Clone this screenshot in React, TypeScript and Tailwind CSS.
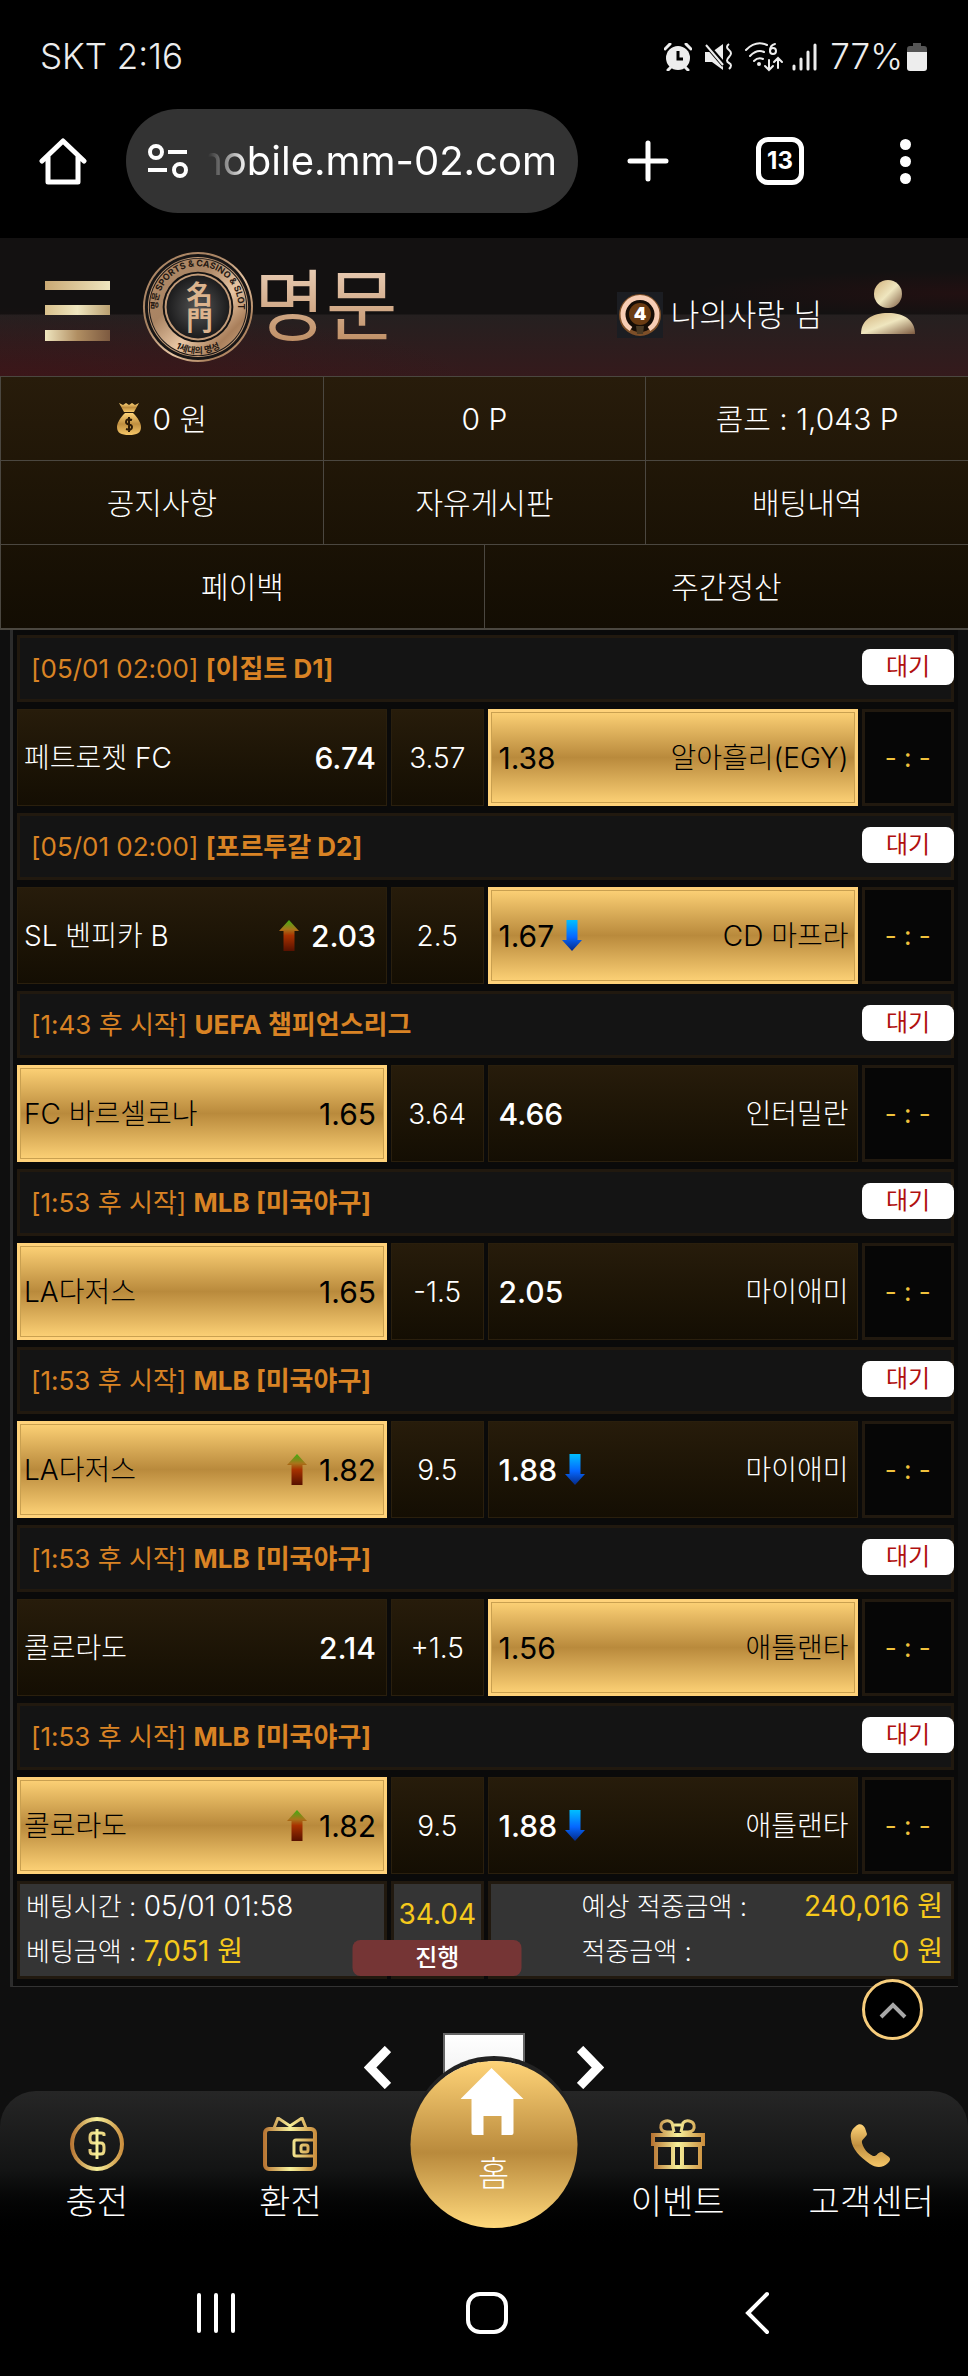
import React from "react";

type Pick = { name?: string; odds: string; move?: "up" | "down" };
type Game = {
  time: string;
  league: string;
  home: Pick;
  draw: string;
  away: Pick;
  picked: "home" | "away";
};

const games: Game[] = [
  { time: "[05/01 02:00]", league: "[이집트 D1]", home: { name: "페트로젯 FC", odds: "6.74" }, draw: "3.57", away: { name: "알아흘리(EGY)", odds: "1.38" }, picked: "away" },
  { time: "[05/01 02:00]", league: "[포르투갈 D2]", home: { name: "SL 벤피카 B", odds: "2.03", move: "up" }, draw: "2.5", away: { name: "CD 마프라", odds: "1.67", move: "down" }, picked: "away" },
  { time: "[1:43 후 시작]", league: "UEFA 챔피언스리그", home: { name: "FC 바르셀로나", odds: "1.65" }, draw: "3.64", away: { name: "인터밀란", odds: "4.66" }, picked: "home" },
  { time: "[1:53 후 시작]", league: "MLB [미국야구]", home: { name: "LA다저스", odds: "1.65" }, draw: "-1.5", away: { name: "마이애미", odds: "2.05" }, picked: "home" },
  { time: "[1:53 후 시작]", league: "MLB [미국야구]", home: { name: "LA다저스", odds: "1.82", move: "up" }, draw: "9.5", away: { name: "마이애미", odds: "1.88", move: "down" }, picked: "home" },
  { time: "[1:53 후 시작]", league: "MLB [미국야구]", home: { name: "콜로라도", odds: "2.14" }, draw: "+1.5", away: { name: "애틀랜타", odds: "1.56" }, picked: "away" },
  { time: "[1:53 후 시작]", league: "MLB [미국야구]", home: { name: "콜로라도", odds: "1.82", move: "up" }, draw: "9.5", away: { name: "애틀랜타", odds: "1.88", move: "down" }, picked: "home" },
];

const darkCell = "bg-linear-to-b from-[#271c0b] to-[#140e03] text-white border border-[#2a1f0d]";
const goldCell =
  "bg-linear-to-b from-[#ffd478] via-[#b98a3c] to-[#ffd478] text-black border border-[#ffd27a] shadow-[inset_0_0_0_2px_#ffd27a,inset_0_0_0_3px_#c9a050]";

function Arrow({ move }: { move: "up" | "down" }) {
  return move === "up" ? (
    <svg width="20" height="31" viewBox="0 0 20 31" aria-label="상승">
      <path d="M10 0 20 11H15.500V31H4.500V11H0Z" fill="url(#moveUp)" />
    </svg>
  ) : (
    <svg width="20" height="31" viewBox="0 0 20 31" aria-label="하락">
      <path d="M10 31 0 20H4.500V0H15.500V20H20Z" fill="url(#moveDown)" />
    </svg>
  );
}

// gradients shared by every icon on the page
function Gradients() {
  return (
    <svg width="0" height="0" className="absolute" aria-hidden="true">
      <defs>
        <linearGradient id="moveUp" x1="0" y1="0" x2="0" y2="1">
          <stop offset="0" stopColor="#3fae12" />
          <stop offset="0.3" stopColor="#a8741a" />
          <stop offset="0.5" stopColor="#a83200" />
          <stop offset="1" stopColor="#571100" />
        </linearGradient>
        <linearGradient id="moveDown" x1="0" y1="0" x2="0" y2="1">
          <stop offset="0" stopColor="#00bfff" />
          <stop offset="0.55" stopColor="#0566ff" />
          <stop offset="1" stopColor="#062a86" />
        </linearGradient>
        <linearGradient id="gold" x1="0" y1="0" x2="1" y2="1">
          <stop offset="0" stopColor="#d2b27c" />
          <stop offset="0.5" stopColor="#efe6bf" />
          <stop offset="1" stopColor="#7d5a40" />
        </linearGradient>
        <linearGradient id="neon" gradientUnits="userSpaceOnUse" x1="0" y1="0" x2="54" y2="0">
          <stop offset="0" stopColor="#b5702f" />
          <stop offset="0.5" stopColor="#f6f09a" />
          <stop offset="1" stopColor="#c98a3a" />
        </linearGradient>
        <linearGradient id="goldDown" x1="0" y1="0" x2="0" y2="1">
          <stop offset="0" stopColor="#ffd478" />
          <stop offset="0.5" stopColor="#c08f40" />
          <stop offset="1" stopColor="#f6c768" />
        </linearGradient>
        <linearGradient id="bronze" x1="0" y1="0" x2="1" y2="1">
          <stop offset="0" stopColor="#b08a68" />
          <stop offset="0.35" stopColor="#a98463" />
          <stop offset="0.6" stopColor="#e8c6a4" />
          <stop offset="0.8" stopColor="#a97f5b" />
          <stop offset="1" stopColor="#d5ac88" />
        </linearGradient>
        <radialGradient id="steel">
          <stop offset="0" stopColor="#555" />
          <stop offset="1" stopColor="#1b1b1c" />
        </radialGradient>
      </defs>
    </svg>
  );
}

function StatusBar() {
  return (
    <div className="flex h-[109px] items-center justify-between pr-[41px] pl-10 pt-1 text-[#ededed]">
      <span className="text-[35px] font-light">SKT 2:16</span>
      <div className="flex items-center">
        <svg width="28" height="28" viewBox="0 0 28 28" fill="#ededed">
          <circle cx="14" cy="15" r="12" />
          <path d="M1 6 6 1M27 6 22 1M4 27l4-4M24 27l-4-4" stroke="#ededed" strokeWidth="3" strokeLinecap="round" />
          <path d="M14 8v8h5" stroke="#000" strokeWidth="3" fill="none" />
        </svg>
        <svg className="ml-3" width="28" height="28" viewBox="0 0 28 28" fill="#ededed">
          <path d="M1 9h7L19 1v26L8 19H1Z" />
          <path d="M1 0 20 22" stroke="#000" strokeWidth="5" />
          <path d="M2 2 19 22" stroke="#ededed" strokeWidth="2" />
          <path d="M25 1q-4 3 0 6t0 7 0 6 0 6" stroke="#ededed" strokeWidth="2" fill="none" />
        </svg>
        <svg className="ml-3" width="40" height="30" viewBox="0 0 40 30" fill="none" stroke="#ededed" strokeWidth="2" strokeLinecap="round">
          <path d="M2 8Q12-2 23 3M6 14q7-7 14-4M10 19q4-4 9-2" />
          <circle cx="15" cy="22" r="1" fill="#ededed" />
          <path d="M31 2q-5 1-5 7" />
          <circle cx="29" cy="9" r="3" />
          <path d="M25 18v10M21 24l4 4 4-4M34 26V16M30 20l4-4 4 4" />
        </svg>
        <svg className="ml-2" width="26" height="28" viewBox="0 0 26 28" stroke="#ededed" strokeWidth="3" strokeLinecap="round">
          <path d="M2 23v3M9 16v10M16 9v17M23 2v24" />
        </svg>
        <span className="ml-3 text-[35px] font-light">77%</span>
        <svg className="ml-1" width="20" height="28" viewBox="0 0 20 28">
          <path d="M6 0h8v3h3q3 0 3 3v4H0V6q0-3 3-3h3Z" fill="#555" />
          <path d="M0 9h20v16q0 3-3 3H3q-3 0-3-3Z" fill="#ededed" />
        </svg>
      </div>
    </div>
  );
}

function BrowserBar() {
  return (
    <div className="flex h-[129px] items-start">
      <button className="flex h-[104px] w-[126px] items-center justify-center" aria-label="홈페이지">
        <svg width="48" height="48" viewBox="0 0 48 48" fill="none" stroke="#fff" strokeWidth="5" strokeLinejoin="round" strokeLinecap="round">
          <path d="M3 24 24 4 45 24M9 19V45H39V19" />
        </svg>
      </button>
      <div className="flex h-[104px] w-[452px] items-center rounded-full bg-[#333] pl-[22px] pr-[21px]">
        <svg className="shrink-0" width="40" height="34" viewBox="0 0 40 34" fill="none" stroke="#fff" strokeWidth="4">
          <circle cx="8" cy="8" r="6" />
          <path d="M20 8h19M0 26h19" />
          <circle cx="32" cy="26" r="6" />
        </svg>
        <div className="ml-5 flex flex-1 justify-end overflow-hidden mask-[linear-gradient(to_right,transparent,#000_40px)]">
          <input aria-label="주소" readOnly value="mobile.mm-02.com" className="w-[400px] shrink-0 bg-transparent text-right text-[40px] text-white outline-none" />
        </div>
      </div>
      <button className="ml-[26px] flex h-[104px] w-[88px] items-center justify-center" aria-label="새 탭">
        <svg width="42" height="42" viewBox="0 0 42 42" stroke="#fff" strokeWidth="5" strokeLinecap="round">
          <path d="M21 3v36M3 21h36" />
        </svg>
      </button>
      <button className="ml-10 flex h-[104px] w-[96px] items-center justify-center">
        <span className="flex size-12 items-center justify-center rounded-xl border-[5px] border-white text-2xl font-bold text-white">13</span>
      </button>
      <button className="ml-auto mr-[31px] flex h-[104px] w-16 flex-col items-center justify-center gap-1.5" aria-label="메뉴">
        <span className="size-[11px] rounded-full bg-white" />
        <span className="size-[11px] rounded-full bg-white" />
        <span className="size-[11px] rounded-full bg-white" />
      </button>
    </div>
  );
}

function Seal() {
  return (
    <svg className="shrink-0" width="112" height="112" viewBox="0 0 114 114" aria-label="명문 로고">
      <defs>
        <path id="sealTop" d="M19 72A41 41 0 1 1 95 72" />
        <path id="sealBottom" d="M24 91A47 47 0 0 0 90 91" />
      </defs>
      <circle cx="57" cy="57" r="56" fill="url(#bronze)" />
      <circle cx="57" cy="57" r="54" fill="#181616" />
      <circle cx="57" cy="57" r="51" fill="#bd9673" />
      <circle cx="57" cy="57" r="50" fill="#181616" />
      <circle cx="57" cy="57" r="49" fill="url(#bronze)" />
      <circle cx="57" cy="57" r="36" fill="#131212" />
      <circle cx="57" cy="57" r="34" fill="#c39c79" />
      <circle cx="57" cy="57" r="32" fill="url(#steel)" />
      <text fontSize="9" fontWeight="700" fill="#241812">
        <textPath href="#sealTop" startOffset="50%" textAnchor="middle">명문 SPORTS &amp; CASINO &amp; SLOT</textPath>
      </text>
      <text fontSize="9" fontWeight="700" fill="#241812">
        <textPath href="#sealBottom" startOffset="50%" textAnchor="middle">1세대의 명성</textPath>
      </text>
      <text x="57" y="57" fontSize="27" fontWeight="700" writingMode="vertical-rl" textAnchor="middle" fill="#dcb48e">名門</text>
    </svg>
  );
}

function SiteHeader() {
  return (
    <header className="flex h-[138px] items-center bg-[radial-gradient(ellipse_at_0%_100%,#4a0d1255,transparent_35%),radial-gradient(ellipse_at_100%_40%,#4a0d1244,transparent_20%),linear-gradient(to_bottom,#131111_0,#131111_76px,#252020_77px,#351a1c_100%)] pl-[45px] pr-[52px]">
      <button className="flex w-[65px] flex-col gap-[15px] pt-2" aria-label="전체 메뉴">
        <span className="h-[9px] bg-linear-to-r from-[#c9a974] to-[#efe6bf]" />
        <span className="h-[10px] bg-linear-to-r from-[#d8c08c] via-[#efe6bf] to-[#b99f70]" />
        <span className="h-[11px] bg-linear-to-r from-[#efe6bf] via-[#b08e62] to-[#7d5a40]" />
      </button>
      <a href="#home" className="ml-8 flex items-center">
        <Seal />
        <span className="bg-linear-to-b from-[#ecd3bd] to-[#b98558] bg-clip-text text-[78px] leading-[96px] font-normal text-transparent">명문</span>
      </a>
      <div className="ml-auto flex items-center gap-2 pt-4">
        <svg width="46" height="46" viewBox="0 0 46 46">
          <rect width="46" height="46" fill="#1b1d22" />
          <circle cx="23" cy="23" r="19" fill="#160d06" stroke="#7d4f28" strokeWidth="4" />
          <path d="M14 37A17 17 0 1 1 32 37" fill="none" stroke="#f7cdb4" strokeWidth="5" />
          <circle cx="23" cy="22" r="11" fill="#6a3b12" />
          <path d="M19 34h8l-1 8h-6Z" fill="#4b3a24" />
          <text x="23" y="28" textAnchor="middle" fontSize="18" fontWeight="900" fill="#fff">4</text>
        </svg>
        <span className="text-[31px] leading-10 font-light text-white">나의사랑 님</span>
      </div>
      <button className="ml-[38px]" aria-label="내 정보">
        <svg width="56" height="56" viewBox="0 0 56 56" fill="url(#gold)">
          <circle cx="28" cy="15" r="14" />
          <path d="M1 55C1 41 12 34 28 34S55 41 55 55Z" />
        </svg>
      </button>
    </header>
  );
}

function MenuLink({ children }: { children: React.ReactNode }) {
  return (
    <a href="#menu" className="flex h-[84px] flex-1 items-center justify-center gap-3 border-t border-l border-[#4b4740]">
      {children}
    </a>
  );
}

function SiteMenu() {
  return (
    <nav className="border-b-2 border-[#4b4740] bg-linear-to-b from-[#281c0b] to-[#130d03] text-3xl font-light text-white">
      <div className="flex">
        <MenuLink>
          <svg width="24" height="32" viewBox="0 0 24 32" fill="url(#goldDown)">
            <path d="M2 0l4 2 3-2 3 2 3-2 3 2 4-2-5 9H7Z" />
            <path d="M8 10h8c5 5 8 10 8 14 0 6-4 8-12 8S0 30 0 24c0-4 3-9 8-14Z" />
            <path d="M15 17q-6-2-6 2 0 2 3 2.500t3 2.500q0 4-6 2M12 14v15" fill="none" stroke="#2b1a06" strokeWidth="2" />
          </svg>
          0 원
        </MenuLink>
        <MenuLink>0 P</MenuLink>
        <MenuLink>콤프 : 1,043 P</MenuLink>
      </div>
      <div className="flex">
        <MenuLink>공지사항</MenuLink>
        <MenuLink>자유게시판</MenuLink>
        <MenuLink>배팅내역</MenuLink>
      </div>
      <div className="flex">
        <MenuLink>페이백</MenuLink>
        <MenuLink>주간정산</MenuLink>
      </div>
    </nav>
  );
}

function GameRow({ game }: { game: Game }) {
  const homeOn = game.picked === "home";
  return (
    <>
      <div className="flex h-[67px] items-center bg-[#141414] pl-3.5 shadow-[inset_0_0_0_3px_#21190f]">
        <h3 className="text-[26px] font-normal text-[#d98324]">
          {game.time} <b className="font-bold">{game.league}</b>
        </h3>
        <span className="mt-3.5 ml-auto flex h-9 w-[92px] items-center justify-center self-start rounded-lg bg-white text-2xl text-[#b01010]">
          대기
        </span>
      </div>
      <div className="grid h-[97px] grid-cols-[4fr_1fr_4fr_1fr] gap-1 text-[28px] font-light">
        <button className={`flex items-center pr-2.5 pl-1.5 ${homeOn ? goldCell : darkCell}`}>
          <span>{game.home.name}</span>
          <span className="ml-auto flex items-center gap-3">
            {game.home.move && <Arrow move={game.home.move} />}
            <span className={homeOn ? "text-3xl font-normal" : "text-3xl font-medium"}>{game.home.odds}</span>
          </span>
        </button>
        <div className={`flex items-center justify-center ${darkCell}`}>{game.draw}</div>
        <button className={`flex items-center pr-2 pl-2.5 ${homeOn ? darkCell : goldCell}`}>
          <span className="flex items-center gap-2">
            <span className={homeOn ? "text-3xl font-medium" : "text-3xl font-normal"}>{game.away.odds}</span>
            {game.away.move && <Arrow move={game.away.move} />}
          </span>
          <span className="ml-auto">{game.away.name}</span>
        </button>
        <div className="flex items-center justify-center border-[3px] border-[#21190f] bg-[#060606] text-[26px] font-normal text-[#f0c23c]">- : -</div>
      </div>
    </>
  );
}

function Summary() {
  return (
    <div className="grid h-[98px] grid-cols-[4fr_1fr_4fr_1fr] gap-1 text-[26px] leading-[45px] font-light text-white">
      <div className="border-[3px] border-[#21190f] bg-[#343434] px-1.5">
        <p>
          베팅시간 : <span className="text-[28px]">05/01 01:58</span>
        </p>
        <p>
          베팅금액 : <span className="text-[28px] font-normal text-[#f6c91c]">7,051 원</span>
        </p>
      </div>
      <div className="relative border-[3px] border-[#21190f] bg-[#343434] pt-2 text-center text-[28px] font-normal text-[#f6c91c]">
        34.04
        <span className="absolute bottom-0 left-1/2 z-10 h-9 w-[169px] -translate-x-1/2 rounded-lg bg-[#753535] text-2xl leading-9 font-medium text-white">진행</span>
      </div>
      <div className="col-span-2 border-[3px] border-[#21190f] bg-[#343434] pr-2 pl-[91px]">
        <p className="flex justify-between">
          예상 적중금액 : <span className="text-[28px] font-normal text-[#f6c91c]">240,016 원</span>
        </p>
        <p className="flex justify-between">
          적중금액 : <span className="text-[28px] font-normal text-[#f6c91c]">0 원</span>
        </p>
      </div>
    </div>
  );
}

function Pager() {
  return (
    <div className="relative flex h-[104px] items-start justify-center gap-[52px]">
      <button className="mt-[59px]" aria-label="이전">
        <svg width="27" height="43" viewBox="0 0 27 43" fill="none" stroke="#fff" strokeWidth="9">
          <path d="M24 3 6 21.500 24 40" />
        </svg>
      </button>
      <button className="mt-[46px] h-[58px] w-[82px] border-2 border-[#666] bg-linear-to-b from-white to-[#eee] pt-4 text-3xl text-black">1</button>
      <button className="mt-[59px]" aria-label="다음">
        <svg width="27" height="43" viewBox="0 0 27 43" fill="none" stroke="#fff" strokeWidth="9">
          <path d="M3 3 21 21.500 3 40" />
        </svg>
      </button>
      <button className="absolute -top-2 right-[45px] flex size-[61px] items-center justify-center rounded-full border-[3px] border-[#f7cd7c] bg-black" aria-label="맨 위로">
        <svg width="28" height="18" viewBox="0 0 28 18" fill="none" stroke="#a8a8a8" strokeWidth="4">
          <path d="M2 16 14 4 26 16" />
        </svg>
      </button>
    </div>
  );
}

function NavItem({ label, children }: { label: string; children: React.ReactNode }) {
  return (
    <a href="#nav" className="flex flex-1 flex-col items-center gap-2 pt-[26px]">
      <svg width="54" height="54" viewBox="0 0 54 54" fill="none" stroke="url(#neon)" strokeWidth="4">
        {children}
      </svg>
      <span className="whitespace-nowrap text-[34px] leading-[46px] font-light">{label}</span>
    </a>
  );
}

function BottomNav() {
  return (
    <nav className="relative flex h-[159px] rounded-t-[36px] bg-linear-to-b from-[#262626] via-[#131414] to-black text-white">
      <NavItem label="충전">
        <circle cx="27" cy="27" r="25" />
        <path d="M34 19v-2q0-1-3-1h-8q-3 0-3 4v2q0 4 3 4h8q3 0 3 4v3q0 4-3 4h-8q-3 0-3-3v-2M27 12v30" strokeWidth="3" />
      </NavItem>
      <NavItem label="환전">
        <rect x="2" y="12" width="50" height="40" rx="4" />
        <path d="M11 11 15 1l12 8L39 1l4 10" strokeWidth="3" />
        <path d="M52 23H33q-2 0-2 2v12q0 2 2 2h19" strokeWidth="3" />
        <rect x="38" y="28" width="7" height="7" rx="2" strokeWidth="3" />
      </NavItem>
      <div className="flex-1" />
      <NavItem label="이벤트">
        <path d="M2 18h50v9H2ZM5 28h44v22H5ZM22 28v22M31 28v22" />
        <path d="M23 15h-7c-5 0-7-3-6-7s8-6 11-2l2 9M30 15h7c5 0 7-3 6-7s-8-6-11-2l-2 9M21 8h11" strokeWidth="3" />
      </NavItem>
      <NavItem label="고객센터">
        <path
          d="M12 9C15 6 19 7 21 11l2 6c0 3-6 5-5 9 2 6 5 10 11 13 4 1 5-5 9-4l7 5c2 2 1 4-1 6-5 5-12 5-18 1C16 40 8 32 7 22c-1-6 1-10 5-13Z"
          fill="url(#goldDown)"
          stroke="none"
        />
      </NavItem>
      <a href="#home" className="absolute -top-[30px] left-[51%] flex size-[167px] -translate-x-1/2 flex-col items-center rounded-full bg-linear-to-b from-[#ffd478] via-[#b98a3c] via-55% to-[#ffd97c] pt-[7px] shadow-[0_-5px_0_#222]">
        <svg width="66" height="67" viewBox="0 0 66 67" fill="#fff">
          <path d="M31 0 63 31H53V65Q53 67 51 67H41V48H23V67H13Q11 67 11 65V31H0Z" />
        </svg>
        <span className="mt-4 text-[34px] leading-[46px] font-light">홈</span>
      </a>
    </nav>
  );
}

function SystemNav() {
  return (
    <div className="flex h-[126px] items-center justify-between bg-black pr-[176px] pl-[181px]">
      <button className="flex w-[70px] justify-center" aria-label="최근 앱">
        <svg width="40" height="42" viewBox="0 0 40 42" stroke="#fff" strokeWidth="4" strokeLinecap="round">
          <path d="M3 3v36M20 3v36M37 3v36" />
        </svg>
      </button>
      <button className="size-[42px] rounded-[14px] border-4 border-white" aria-label="홈" />
      <button className="flex w-[70px] justify-center" aria-label="뒤로">
        <svg width="26" height="44" viewBox="0 0 26 44" fill="none" stroke="#fff" strokeWidth="4" strokeLinecap="round">
          <path d="M23 3 4 22 23 41" />
        </svg>
      </button>
    </div>
  );
}

export default function App() {
  return (
    <div className="flex min-h-screen flex-col bg-[#0f0f0f] font-['Inter','Noto_Sans_CJK_KR',sans-serif]">
      <Gradients />
      <div className="bg-black">
        <StatusBar />
        <BrowserBar />
      </div>
      <SiteHeader />
      <SiteMenu />
      <main className="flex-1">
        <section className="mx-2.5 flex flex-col gap-[7px] border-b border-l-[3px] border-b-[#333] border-l-[#2c2c2c] bg-[#0a0a0a] px-1 pt-[5px] pb-[7px]">
          {games.map((game, i) => (
            <GameRow key={i} game={game} />
          ))}
          <Summary />
        </section>
        <Pager />
      </main>
      <BottomNav />
      <SystemNav />
    </div>
  );
}
